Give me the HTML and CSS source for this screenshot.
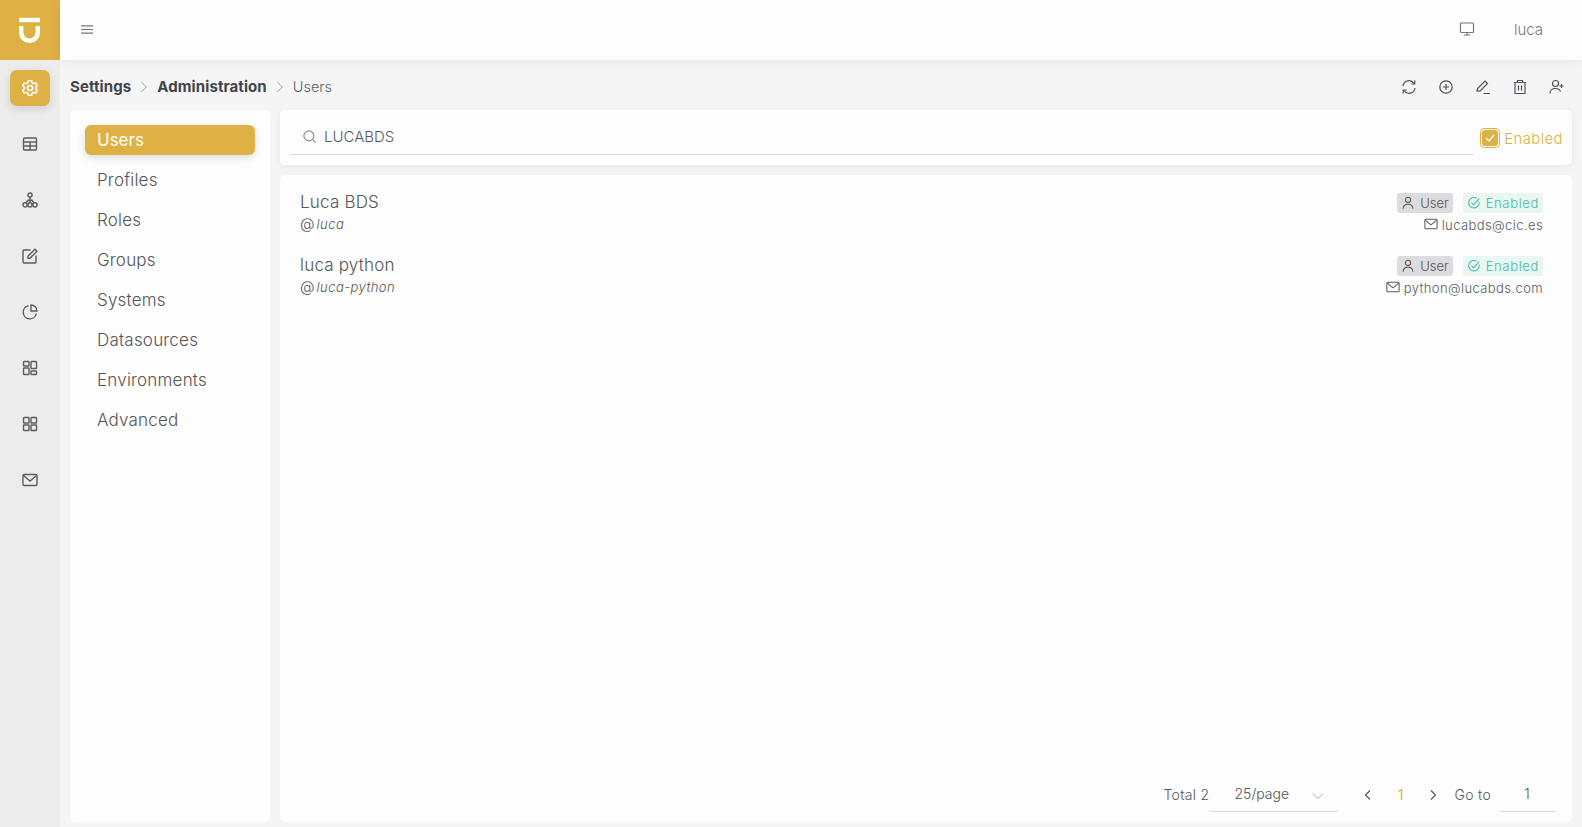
FILE: index.html
```html
<!DOCTYPE html>
<html lang="en">
<head>
    <meta charset="UTF-8">
    <meta name="viewport" content="width=device-width, initial-scale=1.0">
    <title>Users</title>
    <link rel="stylesheet" href="styles.css">
</head>
<body>
    <div class="shell">
        <!-- Icon rail -->
        <aside class="rail">
            <div class="logo">
                <svg width="60" height="60" viewBox="0 0 60 60" stroke-width="4.4">
                    <path d="M19 20h21"/>
                    <path d="M21.2 26v6.5a8.3 8.3 0 0 0 16.6 0V26"/>
                </svg>
            </div>
            <nav class="rail-nav">
                <a class="rail-item active">
                    <svg class="ico" viewBox="1 1 14 14"><path d="M6.6 1.500h2.800l.4 1.900 1.400.8 1.800-.6 1.400 2.400-1.400 1.300v1.400l1.400 1.300-1.400 2.400-1.800-.6-1.400.8-.4 1.900H6.600l-.4-1.900-1.400-.8-1.800.6-1.400-2.400 1.400-1.300V7.300L1.600 6l1.400-2.400 1.800.6 1.400-.8z"/><circle cx="8" cy="8" r="2.200"/></svg>
                </a>
                <a class="rail-item">
                    <svg class="ico" viewBox="0 0 16 16"><rect x="1.500" y="2" width="13" height="12" rx="1.200"/><path d="M1.500 6h13M1.500 10h13M8 6v8"/></svg>
                </a>
                <a class="rail-item">
                    <svg class="ico" viewBox=".5 0 15 15.500"><circle cx="8" cy="3" r="2"/><circle cx="8" cy="12.500" r="2"/><circle cx="3.200" cy="12.500" r="2"/><circle cx="12.800" cy="12.500" r="2"/><path d="M8 5v5.500M4 10.700 6 8h4l2 2.700"/></svg>
                </a>
                <a class="rail-item">
                    <svg class="ico" viewBox="0 0 16 16"><path d="M8.500 2H2a1 1 0 0 0-1 1v11a1 1 0 0 0 1 1h11a1 1 0 0 0 1-1V7.500"/><path d="M6 10.200V8l7-6.800 2 2L8 10.200z"/></svg>
                </a>
                <a class="rail-item">
                    <svg class="ico" viewBox="0 0 16 16"><path d="M6.500 1.800a6.600 6.600 0 1 0 7.800 7.800"/><path d="M9 1a6 6 0 0 1 6 6H9z"/></svg>
                </a>
                <a class="rail-item">
                    <svg class="ico" viewBox="0 0 16 16"><rect x="1.500" y="1.500" width="5.500" height="4.500" rx=".6"/><rect x="1.500" y="8" width="5.500" height="6.500" rx=".6"/><rect x="9" y="1.500" width="5.500" height="7" rx=".6"/><rect x="9" y="11" width="5.500" height="3.500" rx=".6"/></svg>
                </a>
                <a class="rail-item">
                    <svg class="ico" viewBox="0 0 16 16"><rect x="1.500" y="1.500" width="5.500" height="5.500" rx=".6"/><rect x="1.500" y="9" width="5.500" height="5.500" rx=".6"/><rect x="9" y="1.500" width="5.500" height="5.500" rx=".6"/><rect x="9" y="9" width="5.500" height="5.500" rx=".6"/></svg>
                </a>
                <a class="rail-item">
                    <svg class="ico" viewBox="0 0 16 16"><rect x="1" y="2.500" width="14" height="11" rx="1.200"/><path d="M1.500 3.500 8 9l6.500-5.500"/></svg>
                </a>
            </nav>
        </aside>

        <div class="main">
            <header class="topbar">
                <svg class="burger" width="12" height="9" viewBox="0 0 12 9"><path d="M0 .8h12M0 4.500h12M0 8.200h12"/></svg>
                <div class="topbar-right">
                    <svg class="ico screen" viewBox="0 0 16 16"><rect x="1.500" y="2" width="13" height="9.500" rx="1"/><path d="M8 11.500V14M5 14h6"/></svg>
                    <span class="username">luca</span>
                </div>
            </header>

            <div class="crumbbar">
                <div class="crumbs">
                    <b>Settings</b>
                    <svg class="sep" width="8" height="12" viewBox="0 0 8 12"><path d="m1.500 1.500 5 4.500-5 4.500"/></svg>
                    <b>Administration</b>
                    <svg class="sep" width="8" height="12" viewBox="0 0 8 12"><path d="m1.500 1.500 5 4.500-5 4.500"/></svg>
                    <span>Users</span>
                </div>
                <div class="actions">
                    <svg class="ico" viewBox="0 0 16 16"><path d="M2 7a6 6 0 0 1 11-2.500M14 9a6 6 0 0 1-11 2.500"/><path d="M13.800 1.500V5h-3.500M2.200 14.500V11h3.500"/></svg>
                    <svg class="ico" viewBox="0 0 16 16"><circle cx="8" cy="8" r="6.200"/><path d="M8 5v6M5 8h6"/></svg>
                    <svg class="ico" viewBox="0 0 16 16"><path d="M2 12.200 2.600 9.500 10 2l2.500 2.500-7.400 7.500zM8.500 14.500h6.500"/></svg>
                    <svg class="ico" viewBox="0 0 16 16"><path d="M1.800 3.500h12.400M5.500 3.500v-2h5v2M3 3.500v11h10v-11M6.500 6.500v5M9.500 6.500v5"/></svg>
                    <svg class="ico" viewBox="0 0 16 16"><circle cx="6.500" cy="4.500" r="3"/><path d="M1 14.500c0-3.500 2.500-5 5.500-5s4.500 1.200 5 3.200M12.500 5v4M10.500 7h4"/></svg>
                </div>
            </div>

            <div class="panels">
                <ul class="menu">
                    <li class="selected">Users</li>
                    <li>Profiles</li>
                    <li>Roles</li>
                    <li>Groups</li>
                    <li>Systems</li>
                    <li>Datasources</li>
                    <li>Environments</li>
                    <li>Advanced</li>
                </ul>

                <div class="content">
                    <div class="card searchbar">
                        <div class="search">
                            <svg class="ico search-icon" viewBox="0 0 16 16"><circle cx="7.300" cy="7.300" r="5.300"/><path d="m11.300 11.300 3.200 3.200"/></svg>
                            <span>LUCABDS</span>
                        </div>
                        <label class="check">
                            <span class="box">
                                <svg width="12" height="12" viewBox="0 0 12 12"><path d="m2 6 3 3 5-6"/></svg>
                            </span>
                            Enabled
                        </label>
                    </div>

                    <div class="card listcard">
                        <div class="rows">
                            <div class="row">
                                <div>
                                    <div class="name">Luca BDS</div>
                                    <div class="login"><span class="at">@</span><i>luca</i></div>
                                </div>
                                <div class="row-right">
                                    <div class="tags">
                                        <span class="tag tag-user"><svg class="ico" viewBox="0 0 16 16"><circle cx="8" cy="4.500" r="3"/><path d="M2.500 14.500c0-3.500 2.500-5 5.500-5s5.500 1.500 5.500 5"/></svg>User</span>
                                        <span class="tag tag-ok"><svg class="ico" viewBox="0 0 16 16"><path d="M13.800 6.500a6 6 0 1 1-2.800-4"/><path d="m5 7.500 2.500 2.500 6.500-7"/></svg>Enabled</span>
                                    </div>
                                    <div class="mail"><svg class="ico" viewBox="0 0 16 16"><rect x="1" y="2.500" width="14" height="11" rx="1.200"/><path d="M1.500 3.500 8 9l6.500-5.500"/></svg>lucabds@cic.es</div>
                                </div>
                            </div>
                            <div class="row">
                                <div>
                                    <div class="name">luca python</div>
                                    <div class="login"><span class="at">@</span><i>luca-python</i></div>
                                </div>
                                <div class="row-right">
                                    <div class="tags">
                                        <span class="tag tag-user"><svg class="ico" viewBox="0 0 16 16"><circle cx="8" cy="4.500" r="3"/><path d="M2.500 14.500c0-3.500 2.500-5 5.500-5s5.500 1.500 5.500 5"/></svg>User</span>
                                        <span class="tag tag-ok"><svg class="ico" viewBox="0 0 16 16"><path d="M13.800 6.500a6 6 0 1 1-2.800-4"/><path d="m5 7.500 2.500 2.500 6.500-7"/></svg>Enabled</span>
                                    </div>
                                    <div class="mail"><svg class="ico" viewBox="0 0 16 16"><rect x="1" y="2.500" width="14" height="11" rx="1.200"/><path d="M1.500 3.500 8 9l6.500-5.500"/></svg>python@lucabds.com</div>
                                </div>
                            </div>
                        </div>

                        <div class="pager">
                            <span class="pager-text">Total 2</span>
                            <div class="pagesize">
                                <span>25/page</span>
                                <svg width="12" height="8" viewBox="0 0 12 8"><path d="m1 1.500 5 5 5-5"/></svg>
                            </div>
                            <svg class="arrow prev" width="8" height="12" viewBox="0 0 8 12"><path d="M6 1.500 1.500 6 6 10.500"/></svg>
                            <b class="current">1</b>
                            <svg class="arrow next" width="8" height="12" viewBox="0 0 8 12"><path d="M2 1.500 6.500 6 2 10.500"/></svg>
                            <span class="pager-text">Go to</span>
                            <div class="goto">1</div>
                        </div>
                    </div>
                </div>
            </div>
        </div>
    </div>
</body>
</html>
```

FILE: styles.css
```css
* {
    box-sizing: border-box;
}
html, body {
    height: 100%;
}
body {
    margin: 0;
    overflow: hidden;
    background-color: #f5f5f5;
    color: #606266;
    font-family: Inter, "Open Sans", sans-serif;
    font-size: 14px;
    font-weight: 300;
}
svg {
    fill: none;
    stroke: currentColor;
    flex: none;
}
.ico {
    width: 16px;
    height: 16px;
    stroke-width: 1.2;
}
.shell {
    display: flex;
    height: 100vh;
}

/* Icon rail */
.rail {
    width: 60px;
    flex: none;
    background-color: #ececec;
}
.logo {
    height: 60px;
    background-color: #deb145;
    color: #fff;
}
.rail-nav {
    display: flex;
    flex-direction: column;
    align-items: center;
    padding-top: 10px;
}
.rail-item {
    display: flex;
    align-items: center;
    justify-content: center;
    width: 40px;
    height: 36px;
    margin-bottom: 20px;
    border-radius: 7px;
    color: #5c5c5c;
}
.rail-item.active {
    background-color: #deb145;
    color: #fff;
    box-shadow: 0 3px 10px rgba(0,0,0,0.12);
}
.rail-item .ico {
    stroke-width: 1.4;
}

/* Main column */
.main {
    flex: 1;
    min-width: 0;
    display: flex;
    flex-direction: column;
}
.topbar {
    height: 60px;
    flex: none;
    display: flex;
    align-items: center;
    justify-content: space-between;
    padding: 0 39px 2px 21px;
    background-color: #fdfdfd;
    box-shadow: 0 2px 12px rgba(0,0,0,0.06);
    color: #777;
}
.burger {
    stroke-width: 1.2;
}
.topbar-right {
    display: flex;
    align-items: center;
    gap: 39px;
}
.username {
    font-size: 15px;
    color: #777;
}
.crumbbar {
    height: 50px;
    flex: none;
    display: flex;
    align-items: center;
    justify-content: space-between;
    padding: 3px 17px 0 10px;
}
.crumbs {
    display: flex;
    align-items: center;
    font-size: 14.5px;
}
.crumbs b {
    color: #42444a;
    font-size: 15px;
    font-weight: 700;
    letter-spacing: .1px;
}
.crumbs .sep {
    margin: 0 9px;
    color: #aaa;
}
.actions {
    display: flex;
    gap: 21px;
    color: #4d5258;
}
.panels {
    flex: 1;
    min-height: 0;
    display: flex;
    gap: 10px;
    padding: 0 10px 5px;
}

/* Left menu */
.menu {
    width: 200px;
    flex: none;
    margin: 0;
    padding: 15px 15px 0;
    list-style: none;
    background-color: #fdfdfd;
    border-radius: 5px;
}
.menu li {
    height: 30px;
    margin-bottom: 10px;
    padding-left: 12px;
    line-height: 31px;
    font-size: 17px;
    letter-spacing: .2px;
    color: #555;
}
.menu li.selected {
    background-color: #deb145;
    color: #fff;
    font-weight: 400;
    letter-spacing: 0;
    border-radius: 6px;
    box-shadow: 0 3px 8px rgba(0,0,0,0.12);
}

/* Right side */
.content {
    flex: 1;
    min-width: 0;
    display: flex;
    flex-direction: column;
    gap: 10px;
}
.card {
    background-color: #fdfdfd;
    border-radius: 5px;
}
.searchbar {
    height: 55px;
    flex: none;
    display: flex;
    align-items: flex-start;
    padding-left: 10px;
    padding-right: 9px;
    box-shadow: 0 2px 8px rgba(0,0,0,0.06);
}
.search {
    flex: 1;
    height: 45px;
    display: flex;
    align-items: center;
    padding: 8px 0 0 12px;
    gap: 7px;
    border-bottom: 1px solid #d8d9e3;
    font-size: 15px;
    color: #555c66;
}
.search-icon {
    width: 15px;
    height: 15px;
    color: #888;
}
.check {
    display: flex;
    align-items: center;
    gap: 4px;
    margin: 18px 0 0 7px;
    height: 20px;
    color: #deb145;
    font-size: 15px;
    letter-spacing: .35px;
}
.box {
    flex: none;
    display: flex;
    align-items: center;
    justify-content: center;
    width: 20px;
    height: 20px;
    background-color: #deb145;
    border-radius: 5px;
    box-shadow: inset 0 0 0 1px #deb145, inset 0 0 0 2px #fff;
    color: #fff;
}
.box svg {
    stroke-width: 1.2;
}
.listcard {
    flex: 1;
    min-height: 0;
    display: flex;
    flex-direction: column;
    justify-content: space-between;
}
.rows {
    padding: 18px 29px 0 20px;
}
.row {
    height: 63px;
    display: flex;
    justify-content: space-between;
}
.name {
    font-size: 17px;
    line-height: 18px;
    margin-bottom: 3px;
    letter-spacing: .2px;
    color: #555;
}
.login {
    display: flex;
    align-items: center;
    gap: 2px;
    font-size: 13px;
    line-height: 20px;
    letter-spacing: .45px;
    color: #555;
}
.at {
    font-size: 15px;
    line-height: 18px;
    letter-spacing: 0;
}
.row-right {
    display: flex;
    flex-direction: column;
    align-items: flex-end;
}
.tags {
    display: flex;
    gap: 10px;
}
.tag {
    display: flex;
    align-items: center;
    height: 20px;
    padding: 0 4px;
    gap: 5px;
    border-radius: 3px;
    font-size: 13px;
}
.tag .ico {
    width: 14px;
    height: 14px;
}
.tag-user {
    background-color: #dcdcde;
    color: #555;
}
.tag-ok {
    background-color: #e9f6f3;
    color: #45bb9d;
    letter-spacing: .65px;
}
.mail {
    display: flex;
    align-items: center;
    gap: 4px;
    height: 24px;
    font-size: 13px;
    letter-spacing: .4px;
    color: #555c66;
}
.mail .ico {
    width: 14px;
    height: 14px;
    margin-top: -3px;
}

/* Pagination */
.pager {
    display: flex;
    align-items: center;
    justify-content: flex-end;
    height: 32px;
    margin: 0 17px 10px 0;
    font-size: 14px;
    color: #555;
}
.pager-text {
    margin-bottom: 3px;
    letter-spacing: .3px;
}
.pagesize {
    width: 128px;
    height: 32px;
    margin-left: 1px;
    display: flex;
    align-items: center;
    justify-content: space-between;
    padding: 0 14px 4px 24px;
    border-bottom: 1px solid #d8d9e0;
}
.pagesize svg {
    color: #aaa;
    stroke-width: 1;
    margin-top: 4px;
}
.arrow {
    stroke-width: 1.2;
    margin-bottom: 3px;
}
.prev {
    margin-left: 26px;
}
.current {
    width: 16px;
    margin: 0 21px 3px 20px;
    color: #deb145;
    text-align: center;
}
.next {
    margin-right: 17px;
}
.goto {
    width: 56px;
    height: 32px;
    margin-left: 8px;
    text-align: center;
    line-height: 27px;
    border-bottom: 1px solid #d8d9e0;
}
```
